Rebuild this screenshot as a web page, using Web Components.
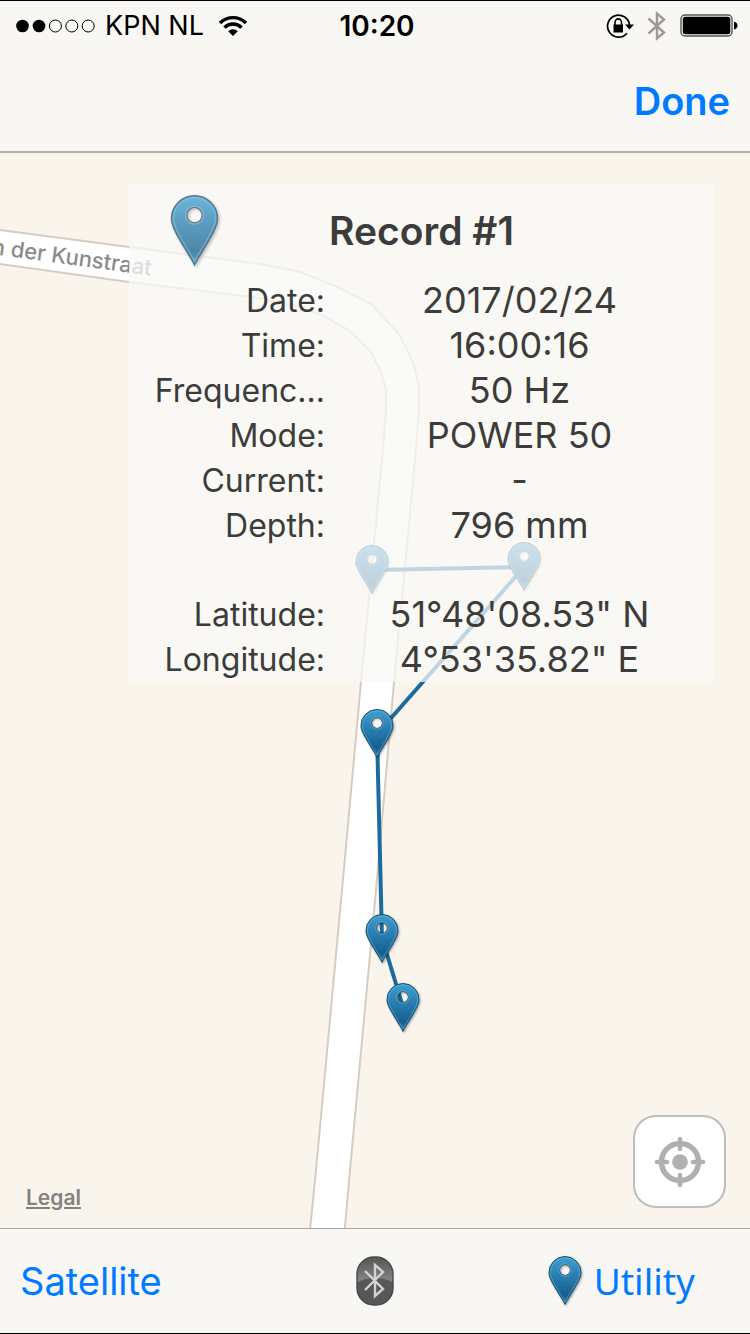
<!DOCTYPE html>
<html lang="en">
<head>
<meta charset="utf-8">
<meta name="viewport" content="width=device-width, initial-scale=1">
<title>Record map</title>
<style>
html, body { margin: 0; background: #000; }
body { font-family: Inter, "Liberation Sans", sans-serif; color: #3c3c3a; }
</style>
</head>
<body>
<record-app></record-app>
<script>
const define = (name, html) => {
  const template = document.createElement('template');
  template.innerHTML = html;
  customElements.define(name, class extends HTMLElement {
    constructor() {
      super();
      this.attachShadow({ mode: 'open' }).append(template.content.cloneNode(true));
    }
  });
};

// Marker artwork on a 34x50 grid, shared by the map and the icon element.
const pinDefs = `
  <linearGradient id="body" x1="0" y1="0" x2="0" y2="1">
    <stop offset="0" stop-color="#3fa0d0"/><stop offset=".3" stop-color="#2e86b8"/>
    <stop offset=".8" stop-color="#175f90"/><stop offset="1" stop-color="#2a7fae"/>
  </linearGradient>
  <filter id="shade" x="-30%" y="-20%" width="170%" height="150%">
    <feDropShadow dx="1" dy="1" stdDeviation="1.2" flood-color="#000" flood-opacity=".35"/>
  </filter>`;
const pinShape = `
  <g filter="url(#shade)">
    <path fill="url(#body)" fill-rule="evenodd" stroke="#1f4c68" stroke-width="1"
      d="M17 48.500C15.500 45 11 38.500 7 31.500C3.500 25.500 1 21 1 16.500A16 16 0 0 1 33 16.500C33 21 30.500 25.500 27 31.500C23 38.500 18.500 45 17 48.500ZM17 8.600A5.400 5.400 0 1 0 17 19.400A5.400 5.400 0 1 0 17 8.600Z"/>
    <path fill="none" stroke="#6fc0e6" stroke-opacity=".45" stroke-width="1"
      d="M17 46C15.500 43 12 37.500 8.200 31C4.800 25 2.300 20.500 2.300 16.500A14.700 14.700 0 0 1 31.700 16.500C31.700 20.500 29.200 25 25.800 31C22 37.500 18.500 43 17 46Z"/>
    <circle cx="17" cy="14" r="6.200" fill="none" stroke="#7cb4d0" stroke-opacity=".6" stroke-width="1"/>
  </g>`;

define('pin-icon', `
<style>
  :host { display: block; width: 34px; height: 50px; }
  svg { display: block; width: 100%; height: 100%; overflow: visible; }
</style>
<svg viewBox="0 0 34 50" aria-hidden="true"><defs>${pinDefs}</defs>${pinShape}</svg>`);

define('status-bar', `
<style>
  :host { display: grid; grid-template-columns: 1fr auto 1fr; align-items: center; height: 50px;
    padding: 0 12px 0 16px; color: #000; font-size: 27px; line-height: 32px; }
  .carrier, .system { display: flex; align-items: center; }
  .carrier { gap: 10px; }
  .system { justify-content: flex-end; gap: 13px; }
  .wifi { margin-left: 5px; }
  time { font-size: 28px; font-weight: 600; }
  svg { display: block; }
</style>
<div class="carrier">
  <svg width="79" height="14" viewBox="0 0 79 14" fill="none" stroke="#000" aria-label="Signal: 2 of 5">
    <circle cx="6.500" cy="7" r="6.300" fill="#000" stroke="none"/><circle cx="23" cy="7" r="6.300" fill="#000" stroke="none"/>
    <circle cx="39.400" cy="7" r="6"/><circle cx="55.800" cy="7" r="6"/><circle cx="72.200" cy="7" r="6"/>
  </svg>
  <span>KPN NL</span>
  <svg class="wifi" width="28" height="22" viewBox="0 0 28 22" fill="none" stroke="#000" stroke-width="3.400" aria-label="Wi-Fi">
    <path d="M1 8A18.500 18.500 0 0 1 27 8"/><path d="M5.500 12.600A12 12 0 0 1 22.500 12.600"/>
    <path d="M9.200 16.300A6.800 6.800 0 0 1 18.800 16.300L14 21Z" fill="#000" stroke="none"/>
  </svg>
</div>
<time>10:20</time>
<div class="system">
  <svg width="28" height="26" viewBox="0 0 28 26" fill="none" stroke="#000" stroke-width="1.700" aria-label="Rotation locked">
    <path d="M21 20.200A11 11 0 1 1 23.500 12"/>
    <path d="M19 11.500H28L23.500 16.500Z" fill="#000" stroke="none"/>
    <rect x="7.500" y="11.500" width="9.500" height="8" fill="#000" stroke="none"/>
    <path d="M9 12V9.500A3.200 3.600 0 0 1 15.500 9.500V12" stroke-width="1.600"/>
  </svg>
  <svg width="20" height="32" viewBox="0 0 20 32" fill="none" stroke="#9b9a98" stroke-width="2.400" aria-label="Bluetooth">
    <path d="M1.500 8.500L17 22.500L10 28.500V3.500L17 9.500L1.500 23.500"/>
  </svg>
  <svg width="58" height="24" viewBox="0 0 58 24" aria-label="Battery full">
    <rect x="1" y="1" width="51" height="21" rx="4" fill="none" stroke="#555" stroke-width="1.400"/>
    <rect x="2.800" y="2.800" width="47.500" height="17.500" rx="2.500"/>
    <path d="M54 7.500Q57.500 8.500 57.500 11.500T54 15.500Z"/>
  </svg>
</div>`);

define('nav-bar', `
<style>
  :host { display: flex; align-items: center; justify-content: flex-end; height: 100px;
    padding: 0 20px; border-bottom: 2px solid #b0adaa; }
  button { border: 0; padding: 0; background: none; color: #007aff; font: 600 38px/48px Inter, sans-serif; cursor: pointer; }
</style>
<button type="button"><slot></slot></button>`);

define('track-map', `
<style>
  :host { display: block; position: absolute; inset: 0; background: #f9f5ed; }
  svg { display: block; width: 100%; height: 100%; }
  text { font: 500 22px Inter, sans-serif; fill: #8b8b8b; }
</style>
<svg viewBox="0 153 750 1075" preserveAspectRatio="xMidYMid slice" role="img" aria-label="Map with measured track">
  <defs>${pinDefs}
    <g id="pin">${pinShape}</g>
    <path id="street" d="M-9 254L213 284"/>
  </defs>
  <path fill="#fff" stroke="#d6ccc2" stroke-width="2" d="M-30 226L0 230L129 247L260 264L300 272L335 286L371 304L399 334L413 362L419 387L419 410L415 460L394 682L376 890L350 1170L343 1250L308 1250L316 1170L342 890L361 682L382 460L386 410L386 390L381 372L371 352L350 331L322 315L300 307L260 298L129 282L0 264L-30 260Z"/>
  <text><textPath href="#street">n der Kunstraat</textPath></text>
  <path fill="none" stroke="#1b6b9e" stroke-width="4" stroke-linejoin="round" d="M372 570L524 567L377 734L382 938L403 1007"/>
  <use href="#pin" x="355" y="545"/>
  <use href="#pin" x="507" y="542"/>
  <use href="#pin" x="360" y="709"/>
  <use href="#pin" x="365" y="914"/>
  <use href="#pin" x="386" y="983"/>
</svg>`);

define('record-row', `
<style>
  :host { display: grid; grid-template-columns: 196px 1fr; align-items: center; height: 45px; }
  .label { text-align: right; font-size: 32px; line-height: 45px; white-space: nowrap; }
  .value { text-align: center; font-size: 36px; line-height: 45px; white-space: nowrap; }
  :host([spaced]) { margin-top: 44px; }
</style>
<span class="label"><slot name="label"></slot></span>
<span class="value"><slot></slot></span>`);

define('record-card', `
<style>
  :host { display: block; position: absolute; top: 31px; left: 129px; right: 36px; background: rgba(248, 248, 247, .75); }
  header { display: grid; grid-template-columns: 130px 1fr 130px; align-items: center; height: 94px; }
  pin-icon { width: 49px; height: 72px; justify-self: center; opacity: .75; }
  h1 { margin: 0; text-align: center; font-size: 39px; line-height: 48px; font-weight: 600; }
</style>
<header><pin-icon></pin-icon><h1><slot name="title"></slot></h1></header>
<slot></slot>`);

define('locate-button', `
<style>
  :host { display: block; position: absolute; right: 24px; bottom: 20px; }
  button { display: grid; place-items: center; box-sizing: border-box; width: 93px; height: 93px; padding: 0;
    border: 2px solid #bdbdbb; border-radius: 23px; background: #fff; cursor: pointer; }
  svg { display: block; }
</style>
<button type="button" aria-label="Show my location">
  <svg width="52" height="52" viewBox="0 0 52 52" fill="none" stroke="#afb1b0">
    <circle cx="26" cy="26" r="18.500" stroke-width="5.500"/>
    <circle cx="26" cy="26" r="7.800" fill="#afb1b0" stroke="none"/>
    <path d="M26 3V13M26 39V49M3 26H13M39 26H49" stroke-width="4.500" stroke-linecap="round"/>
  </svg>
</button>`);

define('legal-link', `
<style>
  :host { display: block; position: absolute; left: 26px; bottom: 16px; }
  a { color: #84827e; font-size: 21px; line-height: 28px; font-weight: 600; text-decoration-thickness: 2px; text-underline-offset: 2px; }
</style>
<a href="#legal"><slot></slot></a>`);

define('tool-bar', `
<style>
  :host { display: grid; grid-template-columns: 1fr auto 1fr; align-items: center; height: 104px;
    padding: 0 20px; border-top: 1px solid #aaa8a5; }
  button { display: flex; align-items: center; gap: 12px; border: 0; padding: 0; background: none;
    color: #007aff; font: 400 38px/48px Inter, sans-serif; cursor: pointer; }
  .utility { justify-self: end; margin-right: 35px; font-family: "Noto Sans", sans-serif; font-size: 37px; }
  svg { display: block; }
</style>
<button type="button">Satellite</button>
<button type="button" aria-label="Bluetooth">
  <svg width="38" height="50" viewBox="0 0 38 50">
    <defs>
      <linearGradient id="top" x1="0" y1="0" x2="0" y2="1"><stop offset="0" stop-color="#555"/><stop offset=".5" stop-color="#848484"/></linearGradient>
      <clipPath id="pill"><rect x="1" y="1" width="36" height="48" rx="17"/></clipPath>
    </defs>
    <rect x="1" y="1" width="36" height="48" rx="17" fill="url(#top)"/>
    <path clip-path="url(#pill)" fill="#575757" d="M0 27Q19 17 38 27V50H0Z"/>
    <rect x="1" y="1" width="36" height="48" rx="17" fill="none" stroke="#494949" stroke-width="1.400"/>
    <path fill="none" stroke="#d2d2d2" stroke-width="2.400" d="M9 15L27 33L19 40V9L27 16L9 34"/>
  </svg>
</button>
<button type="button" class="utility"><pin-icon></pin-icon><span>Utility</span></button>`);

define('record-app', `
<style>
  :host { display: flex; flex-direction: column; box-sizing: border-box; min-height: 100vh; background: #f8f7f4;
    border-top: 1px solid #000; border-bottom: 1px solid #000; }
  main { position: relative; flex: 1; min-height: 620px; overflow: hidden; }
</style>
<status-bar></status-bar>
<nav-bar>Done</nav-bar>
<main>
  <track-map></track-map>
  <record-card>
    <span slot="title">Record #1</span>
    <record-row><span slot="label">Date:</span>2017/02/24</record-row>
    <record-row><span slot="label">Time:</span>16:00:16</record-row>
    <record-row><span slot="label">Frequenc...</span>50 Hz</record-row>
    <record-row><span slot="label">Mode:</span>POWER 50</record-row>
    <record-row><span slot="label">Current:</span>-</record-row>
    <record-row><span slot="label">Depth:</span>796 mm</record-row>
    <record-row spaced><span slot="label">Latitude:</span>51°48'08.53" N</record-row>
    <record-row><span slot="label">Longitude:</span>4°53'35.82" E</record-row>
  </record-card>
  <legal-link>Legal</legal-link>
  <locate-button></locate-button>
</main>
<tool-bar></tool-bar>`);
</script>
</body>
</html>
